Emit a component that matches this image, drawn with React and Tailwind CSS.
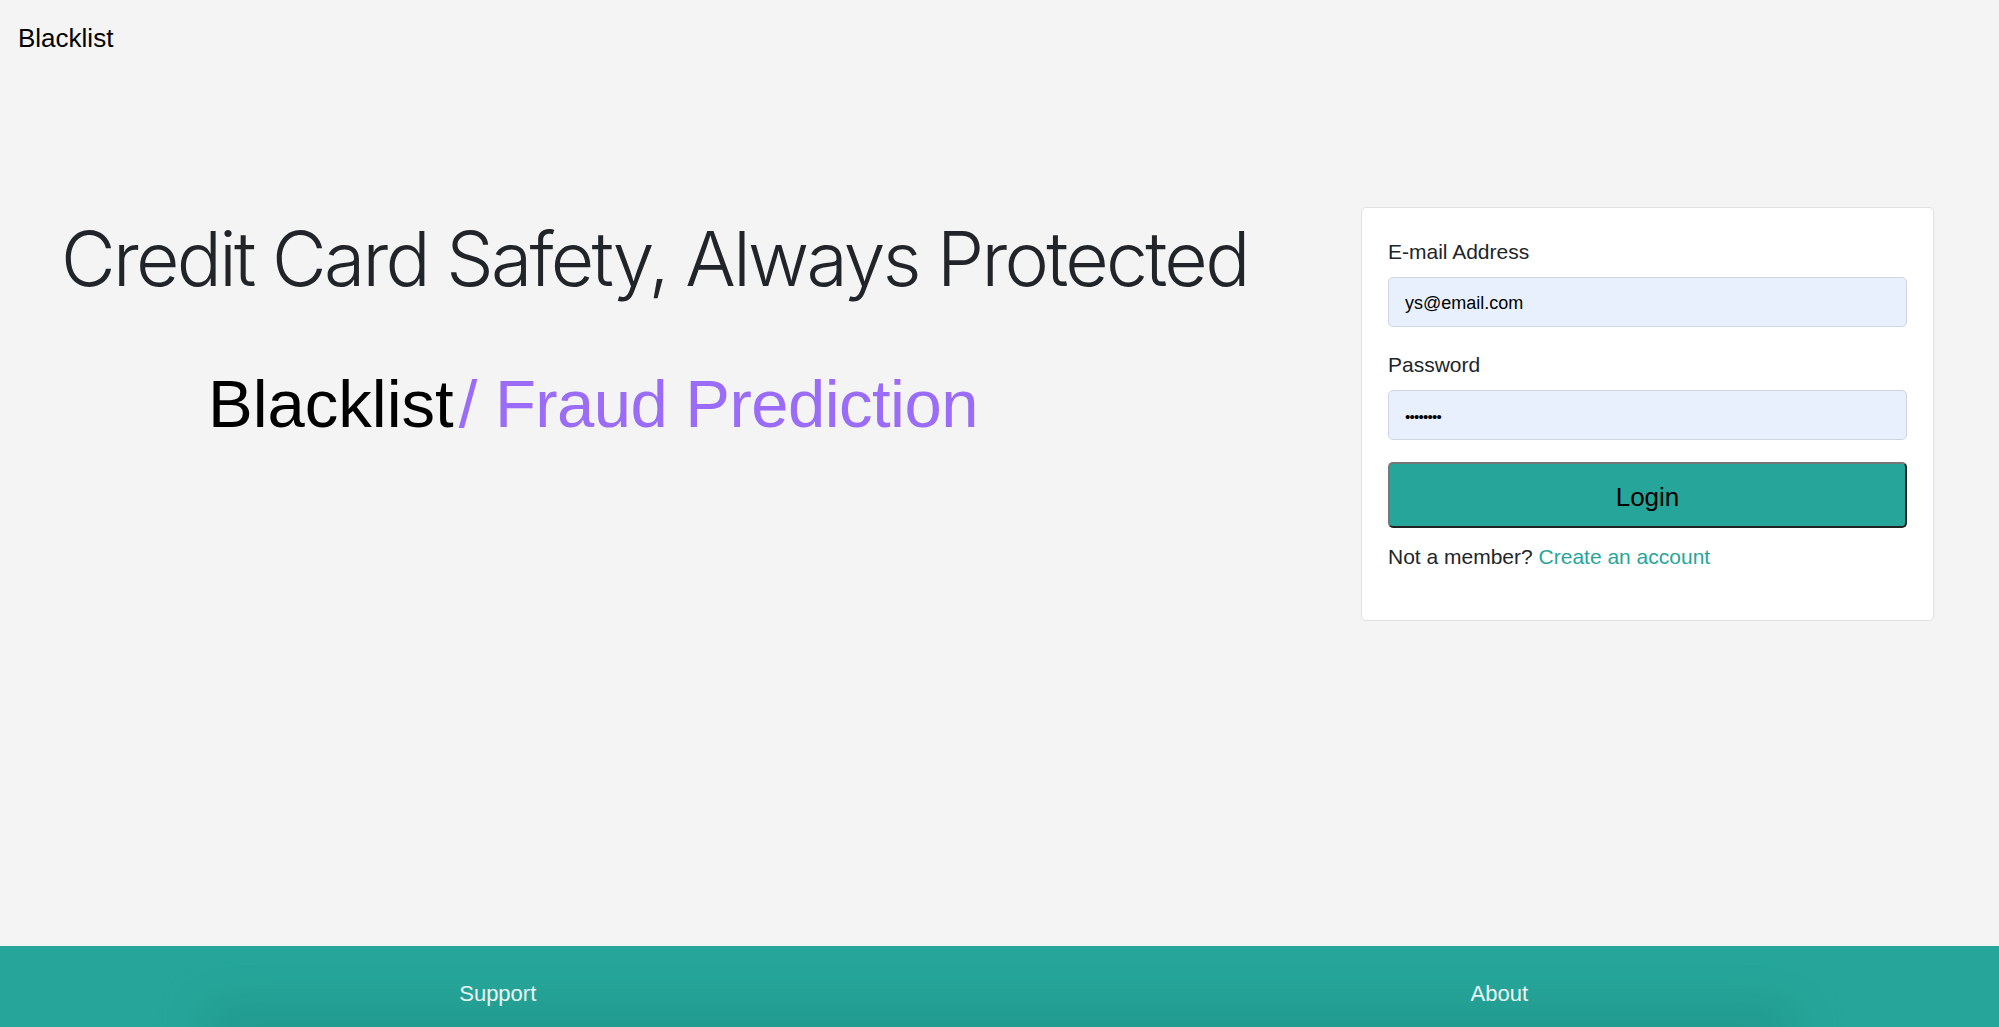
import React from 'react';

const sans = { fontFamily: '"Liberation Sans", Arial, sans-serif' };

export default function App() {
  return (
    <div className="flex h-[1027px] flex-col overflow-hidden bg-[#f4f4f4] font-['Liberation_Sans',Arial,sans-serif]">
      {/* Navbar */}
      <nav className="h-[56px] shrink-0 pl-[18px] pt-[20px] text-[26px] leading-[36px] text-black">Blacklist</nav>

      {/* Hero + login */}
      <main className="flex flex-1 justify-between pl-[61px] pr-[65px]">
        <section>
          <h1 className="mt-[164px] font-['Inter',sans-serif] text-[75px] font-light leading-[77px] tracking-[-0.036em] text-[#212529]">
            Credit Card Safety, Always Protected
          </h1>
          <h2 className="ml-[147px] mt-[73px] text-[67px] leading-[67px]">
            <span className="text-black">Blacklist</span>
            <span className="ml-[5px] tracking-[-0.008em] text-[#9a6cf8]">/ Fraud Prediction</span>
          </h2>
        </section>

        <aside className="mt-[151px] w-[573px] self-start rounded-[5px] border border-[#e0e0e0] bg-white px-[26px] pb-[48px] pt-[29px]">
          <form onSubmit={(e) => e.preventDefault()}>
            <label className="mb-[10px] block text-[21px] leading-[30px] text-[#212529]">E-mail Address</label>
            <input
              type="email"
              readOnly
              defaultValue="ys@email.com"
              className="mb-[23px] block h-[50px] w-full rounded-[5px] border border-[#cfd6e0] bg-[#e8f0fe] px-[16px] pt-[3px] text-[18px] text-black outline-none"
              style={sans}
            />
            <label className="mb-[10px] block text-[21px] leading-[30px] text-[#212529]">Password</label>
            <input
              type="password"
              readOnly
              defaultValue="12345678"
              className="mb-[22px] block h-[50px] w-full rounded-[5px] border border-[#cfd6e0] bg-[#e8f0fe] px-[16px] pt-[3px] text-[15px] tracking-[-0.05em] text-black outline-none"
              style={sans}
            />
            <button
              type="submit"
              className="block h-[66px] w-full rounded-[5px] border-2 border-b-[#222] border-l-[#777] border-r-[#222] border-t-[#777] bg-[#26a69a] pt-[4px] text-[26px] text-black"
            >
              Login
            </button>
            <p className="mt-[14px] text-[21px] leading-[30px] text-[#212529]">
              Not a member? <a href="#" className="text-[#26a69a]">Create an account</a>
            </p>
          </form>
        </aside>
      </main>

      {/* Footer */}
      <footer className="relative h-[81px] shrink-0 overflow-hidden bg-[#26a69a]">
        <div className="pointer-events-none absolute bottom-[-20px] left-[200px] right-[200px] h-[40px] rounded-full bg-[#1a7d73] opacity-40 blur-xl" />
        <div className="relative grid grid-cols-2 pt-[37px] text-center text-[22px] leading-[22px] text-white/90">
          <a href="#" className="-translate-x-[2px]">Support</a>
          <a href="#">About</a>
        </div>
      </footer>
    </div>
  );
}
